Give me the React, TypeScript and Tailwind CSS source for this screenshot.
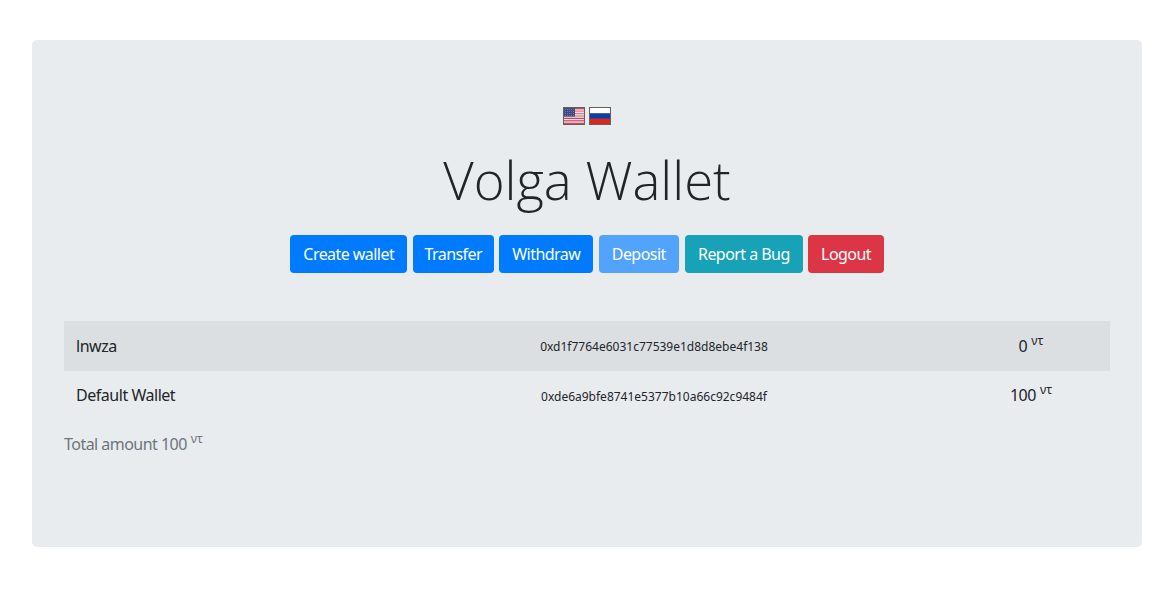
import React from "react";

const wallets = [
  { name: "lnwza", address: "0xd1f7764e6031c77539e1d8d8ebe4f138", amount: 0 },
  { name: "Default Wallet", address: "0xde6a9bfe8741e5377b10a66c92c9484f", amount: 100 },
];

const buttons = [
  { label: "Create wallet", className: "bg-[#007bff] w-[117px]" },
  { label: "Transfer", className: "bg-[#007bff] w-[81px]" },
  { label: "Withdraw", className: "bg-[#007bff] w-[94px]" },
  { label: "Deposit", className: "bg-[#52a3fb] text-[#eef6ff] w-[80px]" },
  { label: "Report a Bug", className: "bg-[#17a2b8] w-[118px] ml-[0.6px]" },
  { label: "Logout", className: "bg-[#dc3545] w-[75.4px]" },
];

const UsFlag = () => (
  <svg width="22" height="18" viewBox="0 0 22 18" className="block">
    <rect width="22" height="18" fill="#5f6368" />
    <rect x="1" y="1" width="20" height="16" fill="#f7e4e8" />
    <rect x="1" y="1" width="20" height="1.3" fill="#c9485f" />
    <rect x="1" y="3.5" width="20" height="1.2" fill="#d9788a" />
    <rect x="1" y="6" width="20" height="1.2" fill="#d9788a" />
    <rect x="1" y="8.4" width="20" height="1.2" fill="#d9788a" />
    <rect x="1" y="10.8" width="20" height="1.2" fill="#c9485f" />
    <rect x="1" y="13.2" width="20" height="1.2" fill="#c9485f" />
    <rect x="1" y="15.7" width="20" height="1.3" fill="#c9485f" />
    <rect x="1" y="1" width="11" height="8.6" fill="#3f4a80" />
    <path d="M2 2.5h9M2 4.5h9M2 6.5h9M2 8.5h9" stroke="#7f87b0" strokeWidth="0.8" strokeDasharray="1 1" />
  </svg>
);

const RuFlag = () => (
  <svg width="22" height="18" viewBox="0 0 22 18" className="block">
    <rect width="22" height="18" fill="#5f6368" />
    <rect x="1" y="1" width="20" height="5.4" fill="#ffffff" />
    <rect x="1" y="6.4" width="20" height="5.3" fill="#0d3fa6" />
    <rect x="1" y="11.7" width="20" height="5.3" fill="#d8281e" />
  </svg>
);

const Unit = () => <sup className="text-[12px] tracking-normal relative -top-[7px] align-baseline ml-1">ντ</sup>;

export default function App() {
  return (
    <div className="bg-white min-h-[604px] pt-10 pl-8 pr-[27px] font-['Noto_Sans','Open_Sans',sans-serif] text-[#212529]">
      <div className="bg-[#e9ecef] rounded-[5px] h-[507px] pt-[67px] px-8">
        <div className="flex justify-center gap-1 h-[18px]">
          <UsFlag />
          <RuFlag />
        </div>
        <h1 className="text-center text-[52.7px] leading-[67px] font-light mt-[21px] font-['Open_Sans',sans-serif] text-[#212529]">
          Volga Wallet
        </h1>
        <div className="flex justify-center gap-[5.5px] mt-[22px]">
          {buttons.map((b) => (
            <button
              key={b.label}
              className={`h-[38px] rounded text-white text-[16px] tracking-[-0.55px] text-center ${b.className}`}
            >
              {b.label}
            </button>
          ))}
        </div>
        <div className="mt-12 text-[16px] tracking-[-0.47px]">
          {wallets.map((w, i) => (
            <div
              key={w.address}
              className={`grid grid-cols-[292px_596px_158px] items-center h-[49.5px] ${i === 0 ? "bg-[#dcdfe2]" : ""}`}
            >
              <div className="pl-3">{w.name}</div>
              <div className="text-center text-[12px] tracking-normal pt-[3px]">{w.address}</div>
              <div className="text-center">
                {w.amount}
                <Unit />
              </div>
            </div>
          ))}
        </div>
        <p className="mt-[12px] text-[16px] tracking-[-0.53px] text-[#6c757d]">
          Total amount 100
          <Unit />
        </p>
      </div>
    </div>
  );
}
